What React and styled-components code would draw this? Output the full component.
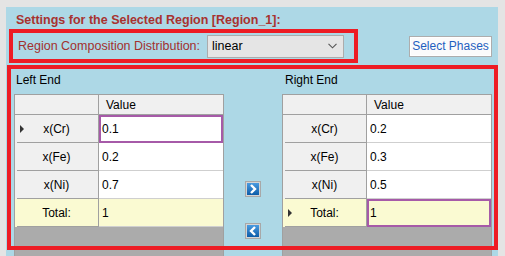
import React from "react";
import styled, { createGlobalStyle } from "styled-components";

const Global = createGlobalStyle`
  html, body { margin: 0; padding: 0; background: #e4e4e4; overflow: hidden; }
  body { font-family: "Liberation Sans", Arial, sans-serif; font-size: 12px; color: #000; }
`;

const Page = styled.div`
  padding: 7px 0 0 6px;
`;

const Panel = styled.div`
  width: 492px;
  height: 249px;
  box-sizing: border-box;
  padding-top: 6px;
  background: #add8e6;
`;

const Title = styled.div`
  margin: 0 0 1px 10px;
  font-weight: bold;
  font-size: 12.5px;
  line-height: 15px;
  color: #a8322f;
`;

const TopRow = styled.div`
  display: flex;
  align-items: center;
  margin-left: 3px;
`;

const Highlight = styled.div`
  position: relative;
  box-sizing: border-box;
  width: ${(p) => p.$w}px;
  height: ${(p) => p.$h}px;
  margin-left: ${(p) => p.$ml || 0}px;
  margin-top: ${(p) => p.$mt || 0}px;
  padding: 4px;
  &::after {
    content: "";
    position: absolute;
    inset: 0;
    border: 4px solid #ed1c24;
    pointer-events: none;
    z-index: 2;
  }
`;

const DistRow = styled.div`
  display: flex;
  align-items: center;
  justify-content: space-between;
  height: 100%;
  padding: 0 10px 0 5px;
  box-sizing: border-box;
`;

const FieldLabel = styled.span`
  color: #a3302e;
  font-size: 12.5px;
`;

const Dropdown = styled.div`
  width: 137px;
  height: 23px;
  box-sizing: border-box;
  background: #e5e5e5;
  border: 1px solid #acacac;
  display: flex;
  align-items: center;
  justify-content: space-between;
  padding: 0 6px 0 4px;
  font-size: 12.5px;
`;

const PhasesButton = styled.button`
  width: 83px;
  height: 21px;
  margin-left: 51px;
  padding: 0;
  box-sizing: border-box;
  background: #fbfbfb;
  border: 1px solid #adadad;
  box-shadow: inset 0 0 0 1px #ffffff;
  color: #1f5fc0;
  font-family: "Liberation Sans", Arial, sans-serif;
  font-size: 12px;
`;

const EndsRow = styled.div`
  display: flex;
  align-items: flex-start;
`;

const EndColumn = styled.div`
  width: 210px;
  margin-left: ${(p) => p.$ml || 0}px;
`;

const EndLabel = styled.div`
  padding: 4px 0 0 ${(p) => p.$indent}px;
  line-height: 15px;
  height: 15px;
  margin-bottom: 6px;
  font-size: 12px;
`;

const Grid = styled.div`
  width: 210px;
  height: 162px;
  box-sizing: border-box;
  border: 1px solid #a0a0a0;
  border-bottom: none;
  background: #ababab;
  display: grid;
  grid-template-columns: 84px 1fr;
  grid-template-rows: 20px repeat(4, 28px);
  align-content: start;
`;

const HeadCell = styled.div`
  box-sizing: border-box;
  background: #f0f0f0;
  border-bottom: 1px solid #a0a0a0;
  border-right: ${(p) => (p.$corner ? "1px solid #a0a0a0" : "none")};
  display: flex;
  align-items: center;
  padding-left: 7px;
  font-size: 12px;
`;

const RowHead = styled.div`
  box-sizing: border-box;
  display: grid;
  grid-template-columns: 16px 1fr 16px;
  align-items: center;
  border-right: 1px solid #a0a0a0;
  background: linear-gradient(#a0a0a0, #a0a0a0) no-repeat 2px 100% / calc(100% - 2px) 1px,
    ${(p) => (p.$total ? "#fafad2" : "#f0f0f0")};
  font-size: 12px;
`;

const Pointer = styled.span`
  margin-left: 5px;
  width: 0;
  height: 0;
  border-left: 4px solid #333;
  border-top: 4px solid transparent;
  border-bottom: 4px solid transparent;
`;

const RowName = styled.span`
  grid-column: 2;
  text-align: center;
`;

const ValueCell = styled.div`
  box-sizing: border-box;
  display: flex;
  align-items: center;
  padding-left: 3px;
  background: ${(p) => (p.$total ? "#fafad2" : "#ffffff")};
  border-bottom: 1px solid #cfcfcf;
  outline: ${(p) => (p.$selected ? "2px solid #a65aa8" : "none")};
  outline-offset: -2px;
  font-size: 12px;
`;

const MiddleColumn = styled.div`
  width: 58px;
  display: flex;
  flex-direction: column;
  align-items: center;
  padding-top: 112px;
  gap: 26px;
`;

const MoveButton = styled.button`
  width: 16px;
  height: 16px;
  padding: 0;
  border: none;
  background: none;
  display: block;
`;

const ArrowIcon = ({ dir }) => (
  <svg width="16" height="16" viewBox="0 0 16 16">
    <defs>
      <linearGradient id={`g${dir}`} x1="0" y1="0" x2="0" y2="1">
        <stop offset="0" stopColor="#4a9be0" />
        <stop offset="1" stopColor="#0d5ca8" />
      </linearGradient>
    </defs>
    <rect x="0.5" y="0.5" width="15" height="15" fill="#d4d4d4" stroke="#a8a8a8" />
    <rect x="2" y="2" width="12" height="12" fill={`url(#g${dir})`} />
    <path
      d={dir === "right" ? "M6 4 L10 8 L6 12" : "M10 4 L6 8 L10 12"}
      fill="none"
      stroke="#ffffff"
      strokeWidth="2.4"
      strokeLinejoin="miter"
    />
  </svg>
);

const Chevron = () => (
  <svg width="9" height="6" viewBox="0 0 9 6">
    <path d="M0.5 0.8 L4.5 4.8 L8.5 0.8" fill="none" stroke="#555" strokeWidth="1.1" />
  </svg>
);

const EndGrid = ({ rows, total, selected }) => (
  <Grid>
    <HeadCell $corner />
    <HeadCell>Value</HeadCell>
    {rows.map(([name, val], i) => (
      <React.Fragment key={name}>
        <RowHead>
          {selected === i ? <Pointer /> : null}
          <RowName>{name}</RowName>
        </RowHead>
        <ValueCell $selected={selected === i}>{val}</ValueCell>
      </React.Fragment>
    ))}
    <RowHead $total>
      {selected === rows.length ? <Pointer /> : null}
      <RowName>Total:</RowName>
    </RowHead>
    <ValueCell $total $selected={selected === rows.length}>
      {total}
    </ValueCell>
  </Grid>
);

export default function App() {
  return (
    <>
      <Global />
      <Page>
        <Panel>
          <Title>Settings for the Selected Region [Region_1]:</Title>
          <TopRow>
            <Highlight $w={349} $h={34}>
              <DistRow>
                <FieldLabel>Region Composition Distribution:</FieldLabel>
                <Dropdown>
                  <span>linear</span>
                  <Chevron />
                </Dropdown>
              </DistRow>
            </Highlight>
            <PhasesButton>Select Phases</PhasesButton>
          </TopRow>
          <Highlight $w={491} $h={185} $ml={1} $mt={2}>
            <EndsRow>
              <EndColumn $ml={3}>
                <EndLabel $indent={2}>Left End</EndLabel>
                <EndGrid
                  rows={[
                    ["x(Cr)", "0.1"],
                    ["x(Fe)", "0.2"],
                    ["x(Ni)", "0.7"],
                  ]}
                  total="1"
                  selected={0}
                />
              </EndColumn>
              <MiddleColumn>
                <MoveButton aria-label="Move right">
                  <ArrowIcon dir="right" />
                </MoveButton>
                <MoveButton aria-label="Move left">
                  <ArrowIcon dir="left" />
                </MoveButton>
              </MiddleColumn>
              <EndColumn>
                <EndLabel $indent={3}>Right End</EndLabel>
                <EndGrid
                  rows={[
                    ["x(Cr)", "0.2"],
                    ["x(Fe)", "0.3"],
                    ["x(Ni)", "0.5"],
                  ]}
                  total="1"
                  selected={3}
                />
              </EndColumn>
            </EndsRow>
          </Highlight>
        </Panel>
      </Page>
    </>
  );
}
